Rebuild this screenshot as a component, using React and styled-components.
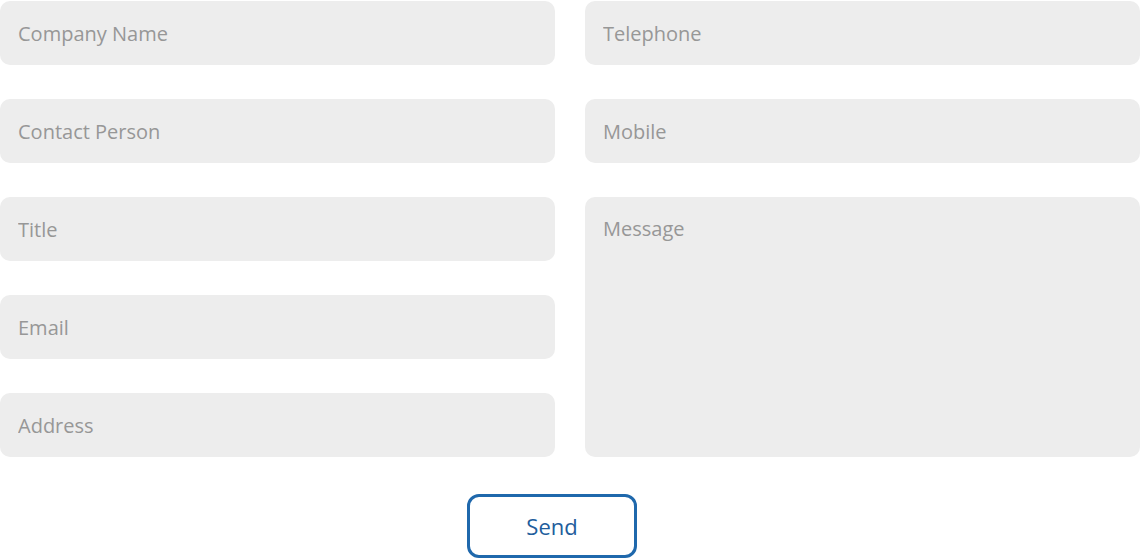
import React from 'react';
import styled, { createGlobalStyle } from 'styled-components';

const GlobalStyle = createGlobalStyle`
  body {
    margin: 0;
    background: #fff;
    font-family: 'Open Sans', 'Noto Sans', sans-serif;
  }
  * { box-sizing: border-box; }
`;

const Form = styled.form`
  width: 1140px;
  padding-top: 1px;
  display: flex;
  flex-direction: column;
  align-items: center;
`;

const Columns = styled.div`
  width: 100%;
  display: grid;
  grid-template-columns: 555px 555px;
  column-gap: 30px;
`;

const Column = styled.div`
  display: flex;
  flex-direction: column;
  gap: 34px;
`;

const fieldStyles = `
  width: 100%;
  border: none;
  border-radius: 10px;
  background: #ededed;
  font-family: 'Open Sans', 'Noto Sans', sans-serif;
  font-size: 20px;
  color: #555;
  padding: 0 18px;
  outline: none;
  &::placeholder { color: #979797; }
`;

const Input = styled.input`
  ${fieldStyles}
  height: 64px;
`;

const TextArea = styled.textarea`
  ${fieldStyles}
  flex: 1;
  resize: none;
  padding-top: 18px;
  line-height: 27px;
`;

const SendButton = styled.button`
  margin-top: 37px;
  margin-right: 36px;
  width: 170px;
  height: 64px;
  border: 3px solid #1f68ac;
  border-radius: 12px;
  background: #fff;
  color: #225d9c;
  font-family: 'Open Sans', 'Noto Sans', sans-serif;
  font-size: 22px;
  cursor: pointer;
`;

export default function App() {
  return (
    <>
      <GlobalStyle />
      <Form onSubmit={(e) => e.preventDefault()}>
        <Columns>
          <Column>
            <Input placeholder="Company Name" />
            <Input placeholder="Contact Person" />
            <Input placeholder="Title" />
            <Input placeholder="Email" />
            <Input placeholder="Address" />
          </Column>
          <Column>
            <Input placeholder="Telephone" />
            <Input placeholder="Mobile" />
            <TextArea placeholder="Message" />
          </Column>
        </Columns>
        <SendButton type="submit">Send</SendButton>
      </Form>
    </>
  );
}
